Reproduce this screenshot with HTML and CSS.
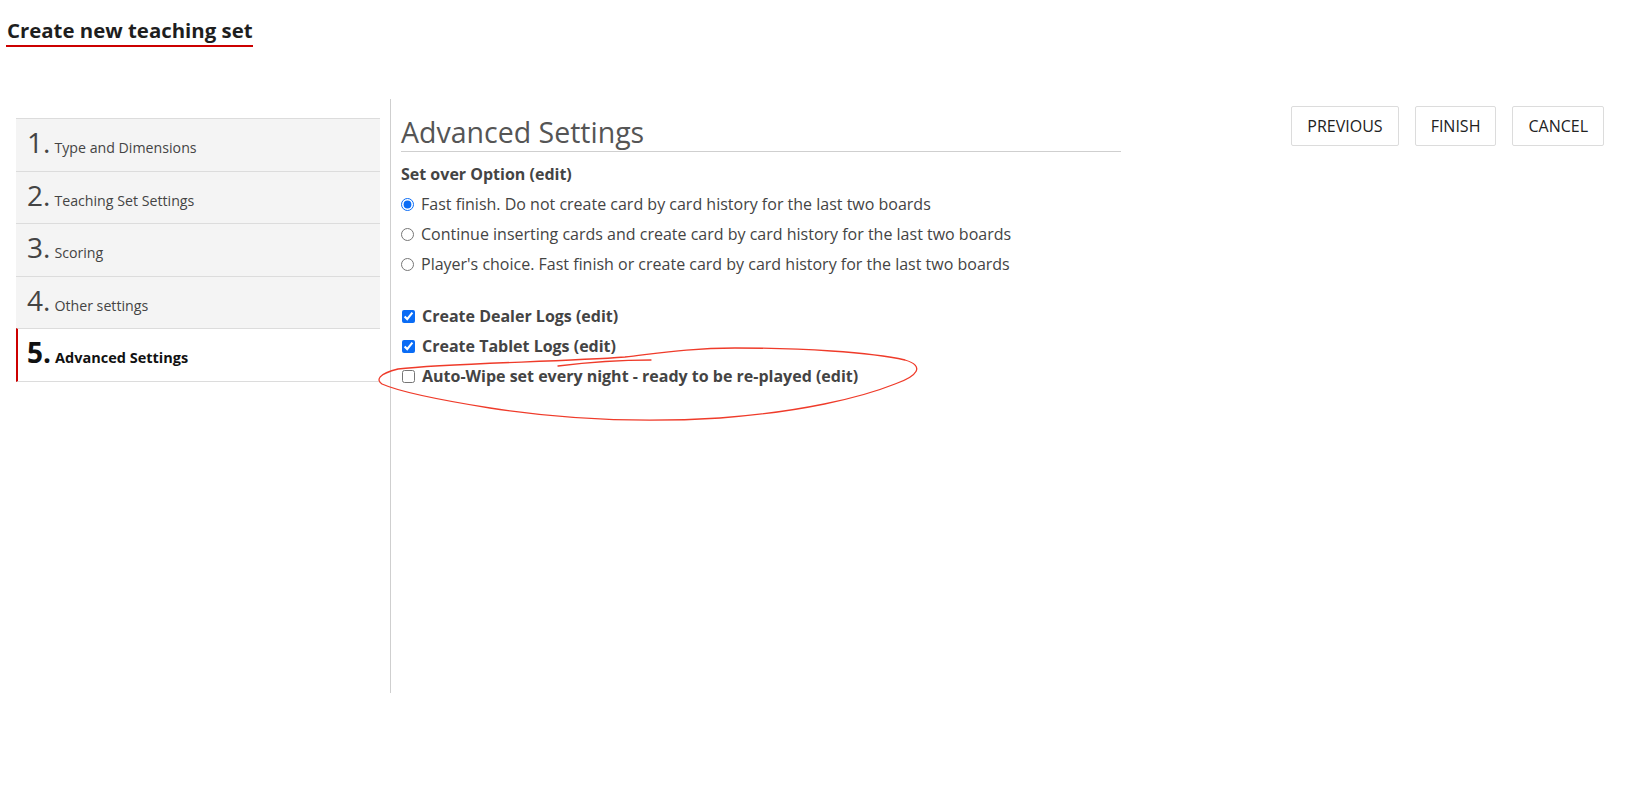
FILE: index.html
```html
<!DOCTYPE html>
<html lang="en">
<head>
    <meta charset="UTF-8">
    <meta name="viewport" content="width=device-width, initial-scale=1.0">
    <title>Create new teaching set</title>
    <link rel="stylesheet" href="styles.css">
</head>
<body>
    <h1 class="page-title">Create new teaching set</h1>

    <div class="wizard">
        <nav class="steps">
            <div class="step"><span class="num">1.</span><span class="label">Type and Dimensions</span></div>
            <div class="step"><span class="num">2.</span><span class="label">Teaching Set Settings</span></div>
            <div class="step"><span class="num">3.</span><span class="label">Scoring</span></div>
            <div class="step"><span class="num">4.</span><span class="label">Other settings</span></div>
            <div class="step current"><span class="num">5.</span><span class="label">Advanced Settings</span></div>
        </nav>

        <section class="panel">
            <h2 class="panel-title">Advanced Settings</h2>

            <div class="field-title">Set over Option (edit)</div>
            <label class="option"><input type="radio" name="setover" checked>Fast finish. Do not create card by card history for the last two boards</label>
            <label class="option"><input type="radio" name="setover">Continue inserting cards and create card by card history for the last two boards</label>
            <label class="option"><input type="radio" name="setover">Player's choice. Fast finish or create card by card history for the last two boards</label>

            <div class="checks">
                <label class="check"><input type="checkbox" checked>Create Dealer Logs (edit)</label>
                <label class="check"><input type="checkbox" checked>Create Tablet Logs (edit)</label>
                <label class="check"><input type="checkbox">Auto-Wipe set every night - ready to be re-played (edit)</label>
            </div>
        </section>

        <div class="actions">
            <button>PREVIOUS</button>
            <button>FINISH</button>
            <button>CANCEL</button>
        </div>
    </div>

    <svg class="scribble" width="1642" height="786" viewBox="0 0 1642 786">
        <path d="M 382 384 C 376 380, 378 374, 398 369 C 450 363, 560 362, 625 357 C 660 353, 690 348, 735 348 C 800 348, 870 352, 905 360 C 925 366, 918 376, 895 384 C 860 398, 800 412, 720 418 C 640 423, 560 419, 490 408 C 440 400, 400 392, 382 384" />
        <path d="M 558 366 C 590 362, 620 360, 651 360" />
    </svg>
</body>
</html>
```

FILE: styles.css
```css
body {
    margin: 0;
    padding: 17px 0 0 0;
    font-family: "Open Sans", "Liberation Sans", sans-serif;
    color: #444;
    background: #fff;
    min-height: 786px;
    box-sizing: border-box;
    position: relative;
}
.page-title {
    display: inline-block;
    margin: 0 0 0 6px;
    padding: 0 0 1px 1px;
    font-size: 20.4px;
    font-weight: 700;
    line-height: 27px;
    color: #1e1e1e;
    border-bottom: 2px solid #cc0000;
}
.wizard {
    display: flex;
    align-items: flex-start;
    margin-top: 52px;
    padding-left: 16px;
    padding-right: 38px;
}
.steps {
    width: 364px;
    margin-top: 19px;
    flex-shrink: 0;
}
.step {
    display: flex;
    align-items: baseline;
    padding: 4px 11px 9.5px 11px;
    background: #f4f4f4;
    border-top: 1px solid #dcdcdc;
}
.step:last-child {
    border-bottom: 1px solid #dcdcdc;
}
.step .num {
    font-size: 28px;
    line-height: 38px;
    color: #444;
}
.step .label {
    margin-left: 4px;
    font-size: 14.2px;
    color: #444;
}
.step.current {
    background: #fff;
    border-left: 2px solid #cc0000;
    padding-left: 9px;
}
.step.current .num,
.step.current .label {
    font-weight: 700;
    color: #111;
}
.step.current .label {
    font-size: 14.5px;
}
.panel {
    width: 720px;
    min-height: 580px;
    margin-left: 10px;
    padding: 14px 0 0 10px;
    border-left: 1px solid #cfcfcf;
    flex-shrink: 0;
}
.panel-title {
    margin: 0;
    font-size: 28.5px;
    font-weight: 400;
    line-height: 38px;
    color: #555;
    border-bottom: 1px solid #cfcfcf;
}
.field-title {
    margin-top: 7px;
    font-size: 16px;
    font-weight: 700;
    line-height: 30px;
    color: #444;
}
.option,
.check {
    display: flex;
    align-items: center;
    height: 30px;
    font-size: 16px;
    color: #444;
}
.option input,
.check input {
    width: 13px;
    height: 13px;
    margin: 0 7px 0 0;
    accent-color: #0a6cf5;
}
.check input {
    margin-left: 1px;
}
.checks {
    margin-top: 22px;
}
.check {
    font-weight: 700;
}
.actions {
    display: flex;
    gap: 16px;
    margin-left: auto;
    margin-top: 7px;
}
.actions button {
    height: 40px;
    padding: 0 15px;
    background: #fff;
    border: 1px solid #dcdcdc;
    border-radius: 2px;
    font-family: "Open Sans", "Liberation Sans", sans-serif;
    font-size: 16px;
    color: #222;
    cursor: pointer;
}
.scribble {
    position: absolute;
    top: 0;
    left: 0;
    pointer-events: none;
}
.scribble path {
    fill: none;
    stroke: #ef3b2a;
    stroke-width: 1.3;
    stroke-linecap: round;
}
```
